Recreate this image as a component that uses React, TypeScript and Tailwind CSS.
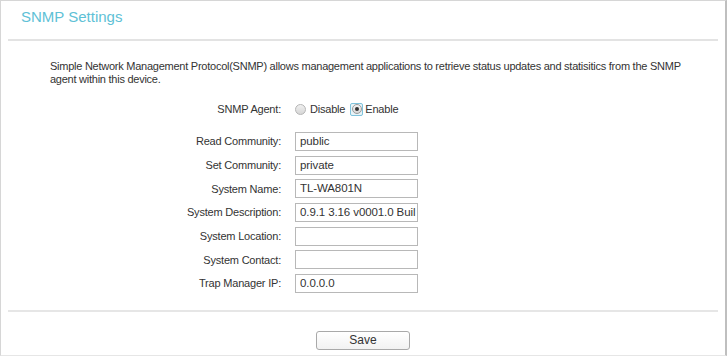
import React from "react";

const rows: { label: string; value: string }[] = [
  { label: "Read Community:", value: "public" },
  { label: "Set Community:", value: "private" },
  { label: "System Name:", value: "TL-WA801N" },
  { label: "System Description:", value: "0.9.1 3.16 v0001.0 Buil" },
  { label: "System Location:", value: "" },
  { label: "System Contact:", value: "" },
  { label: "Trap Manager IP:", value: "0.0.0.0" },
];

function Radio({ checked }: { checked?: boolean }) {
  if (checked) {
    return (
      <span className="flex h-[13px] w-[13px] items-center justify-center rounded-[2px] border border-[#7fc3dc] bg-[#e8f4f8]">
        <span className="flex h-[10px] w-[10px] items-center justify-center rounded-full border border-[#9a9a9a] bg-gradient-to-b from-[#f4f4f4] to-[#d8d8d8]">
          <span className="h-[4px] w-[4px] rounded-full bg-[#333]" />
        </span>
      </span>
    );
  }
  return (
    <span className="h-[11px] w-[11px] rounded-full border border-[#b5b5b5] bg-gradient-to-b from-[#f0f0f0] to-[#d6d6d6]" />
  );
}

export default function App() {
  return (
    <div
      className="flex h-[356px] w-[727px] flex-col border-l border-t border-[#d6d6d6] border-r-2 border-r-[#bfbfbf] border-b border-b-[#e6e6e6] bg-white text-[#333]"
      style={{ fontFamily: '"Liberation Sans", Arial, sans-serif' }}
    >
      <div className="h-[38px] pl-[20px] pt-[6px] text-[15px] leading-[20px] text-[#5ec1d6]">
        SNMP Settings
      </div>
      <div className="mx-[7px] h-[2px] bg-[#e3e3e3]" />
      <div className="pl-[49px] pt-[19px] pr-[30px] text-[11px] leading-[13px] tracking-[-0.25px]">
        Simple Network Management Protocol(SNMP) allows management applications to retrieve status updates and statisitics from the SNMP agent within this device.
      </div>
      <div className="mt-[15px] flex h-[16px] items-center text-[11px] tracking-[-0.2px]">
        <div className="w-[281px] pr-[1px] text-right">SNMP Agent:</div>
        <div className="ml-[13px] flex items-center">
          <Radio />
          <span className="ml-[4px]">Disable</span>
          <span className="ml-[5px]">
            <Radio checked />
          </span>
          <span className="ml-[2px]">Enable</span>
        </div>
      </div>
      <div className="mt-[15px] flex flex-col gap-[4.7px]">
        {rows.map((r) => (
          <div key={r.label} className="flex h-[19px] items-center text-[11px] tracking-[-0.2px]">
            <div className="w-[281px] pr-[1px] text-right">{r.label}</div>
            <div className="ml-[13px] flex h-[19px] w-[123px] items-center overflow-hidden whitespace-nowrap border border-[#b8b8b8] pl-[4px] text-[11.5px] tracking-[-0.1px] text-[#333]">
              {r.value}
            </div>
          </div>
        ))}
      </div>
      <div className="mx-[7px] mt-[17px] h-[2px] bg-[#e6e6e6]" />
      <div className="mt-[19px] flex">
        <button className="ml-[315px] h-[19px] w-[94px] rounded-[3px] border border-[#a9a9a9] bg-gradient-to-b from-white to-[#f2f2f2] text-[12px] leading-[17px] text-[#333]">
          Save
        </button>
      </div>
    </div>
  );
}
